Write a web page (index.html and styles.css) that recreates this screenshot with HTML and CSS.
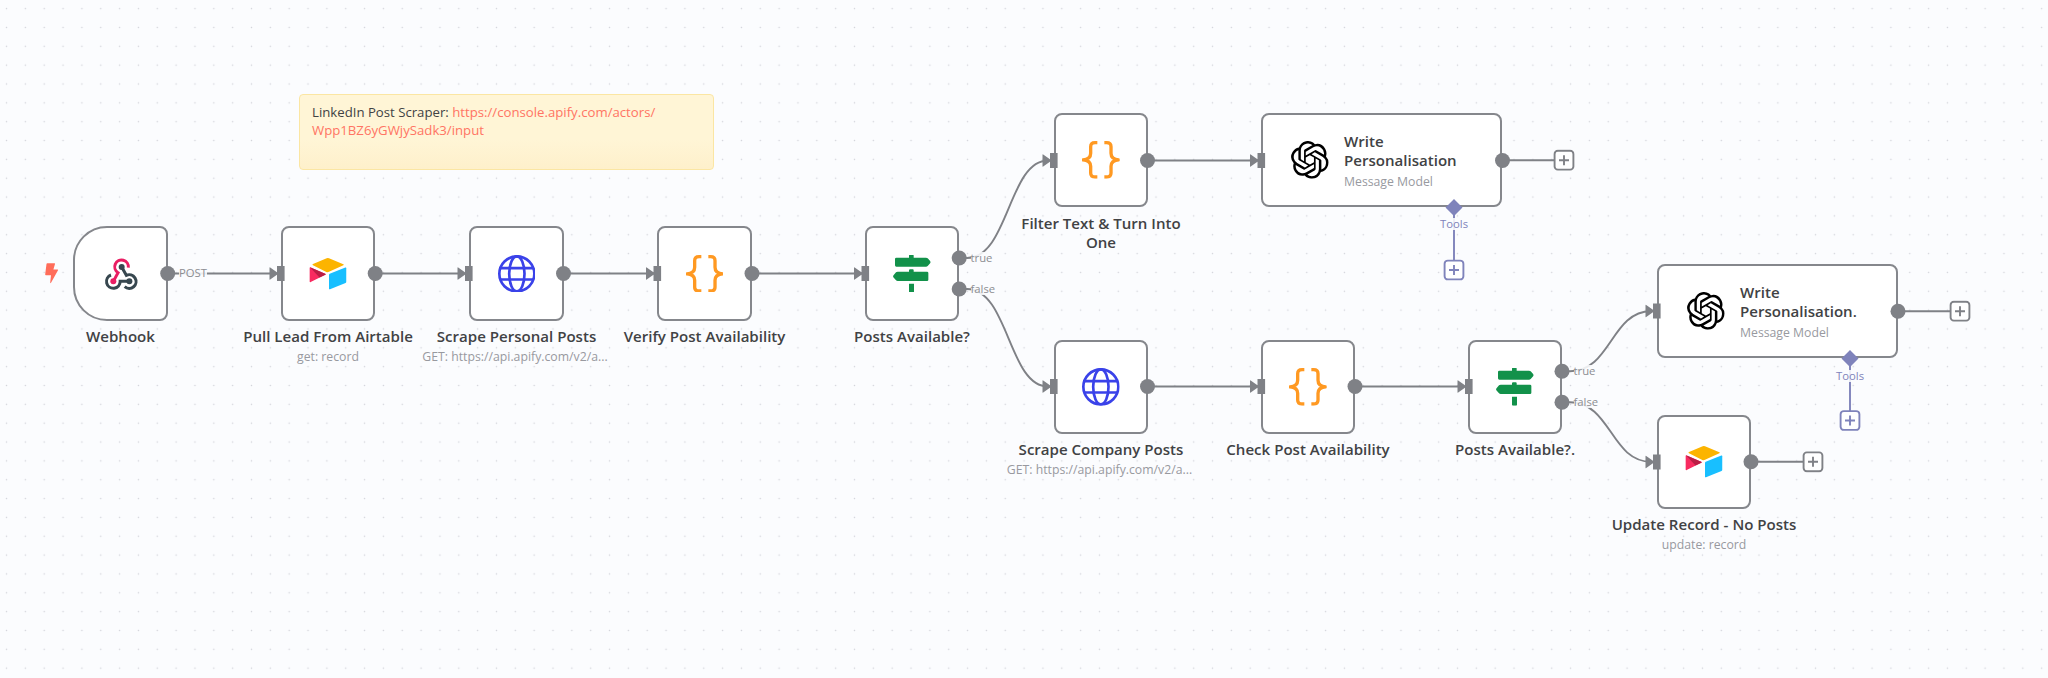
FILE: index.html
```
<!DOCTYPE html>
<html lang="en">
<head>
<meta charset="utf-8">
<title>Workflow</title>
<link rel="stylesheet" href="styles.css">
</head>
<body>
<svg class="defs" aria-hidden="true">
  <symbol id="i-webhook" viewBox="215 134 113 113">
    <g fill="none" stroke-width="9">
      <path stroke="#37474f" d="M274 170L288 195A20.500 20.500 0 1 1 283 229"/>
      <path stroke="#37474f" d="M297 213H269.500A20.500 20.500 0 1 1 242 194"/>
      <path stroke="#e91e63" d="M249 213L263 187A20.500 20.500 0 1 1 294 172"/>
    </g>
    <circle cx="274" cy="170" r="9" fill="#37474f"/><circle cx="297" cy="213" r="9" fill="#37474f"/><circle cx="249" cy="213" r="9" fill="#e91e63"/>
  </symbol>
  <symbol id="i-airtable" viewBox="237 134 113 113">
    <path fill="#fcb400" d="M290 144Q293 142.500 297 144L340 161.500Q343 163 340 164.500L297 184.500Q293 187 289 185L249 165Q245 163 249 161Z"/>
    <path fill="#18bfff" d="M297 193.500Q297 191.500 299 190.500L346 171.500Q349 170.500 349 173.500V214.500Q349 217 346.500 218L300 236.500Q297 237.500 297 235Z"/>
    <path fill="#f82b60" d="M239 173Q239 170 242.500 171.500L285.500 190Q289 191.500 286 193.500L242 215Q239 216.500 239 213.500Z"/>
    <path fill="#ba1e45" d="M240 171L285.500 190Q289 191.500 286 193.500L268.500 201.500Z"/>
  </symbol>
  <symbol id="i-globe" viewBox="0 0 113 113">
    <g fill="none" stroke="#3a42e9" stroke-width="8"><circle cx="56.500" cy="56.500" r="52.500"/><ellipse cx="56.500" cy="56.500" rx="23" ry="52.500"/><path d="M7 39.500H106M7 73.500H106"/></g>
  </symbol>
  <symbol id="i-code" viewBox="259 135 113 113">
    <path fill="none" stroke="#ff9922" stroke-width="10" stroke-linejoin="round" d="M305 140H298Q285 140 285 152V172Q285 190 262 191.500Q285 193 285 211V231Q285 243 298 243H305M326 140H333Q346 140 346 152V172Q346 190 369 191.500Q346 193 346 211V231Q346 243 333 243H326"/>
  </symbol>
  <symbol id="i-sign" viewBox="160 133 113 113">
    <path fill="#12914a" d="M208 141V135Q208 132 211 132H219Q222 132 222 135V141H259Q262 141 264 143L272 152Q274 154.500 272 157L264 166Q262 168 259 168H170Q166 168 166 164V145Q166 141 170 141ZM208 183V179Q208 176 211 176H219Q222 176 222 179V183H262Q266 183 266 187V207Q266 211 262 211H174Q171 211 169 209L161 199.500Q159.500 197 161 194.500L169 185Q171 183 174 183ZM208 219H223V243Q223 246 220 246H211Q208 246 208 243Z"/>
  </symbol>
  <symbol id="i-openai" viewBox="0 0 24 24">
    <path d="M22.2819 9.8211a5.9847 5.9847 0 0 0-.5157-4.9108 6.0462 6.0462 0 0 0-6.5098-2.9A6.0651 6.0651 0 0 0 4.9807 4.1818a5.9847 5.9847 0 0 0-3.9977 2.9 6.0462 6.0462 0 0 0 .7427 7.0966 5.98 5.98 0 0 0 .511 4.9107 6.051 6.051 0 0 0 6.5146 2.9001A5.9847 5.9847 0 0 0 13.2599 24a6.0557 6.0557 0 0 0 5.7718-4.2058 5.9894 5.9894 0 0 0 3.9977-2.9001 6.0557 6.0557 0 0 0-.7475-7.0729zm-9.022 12.6081a4.4755 4.4755 0 0 1-2.8764-1.0408l.1419-.0804 4.7783-2.7582a.7948.7948 0 0 0 .3927-.6813v-6.7369l2.02 1.1686a.071.071 0 0 1 .038.052v5.5826a4.504 4.504 0 0 1-4.4945 4.4944zm-9.6607-4.1254a4.4708 4.4708 0 0 1-.5346-3.0137l.142.0852 4.783 2.7582a.7712.7712 0 0 0 .7806 0l5.8428-3.3685v2.3324a.0804.0804 0 0 1-.0332.0615L9.74 19.9502a4.4992 4.4992 0 0 1-6.1408-1.6464zM2.3408 7.8956a4.485 4.485 0 0 1 2.3655-1.9728V11.6a.7664.7664 0 0 0 .3879.6765l5.8144 3.3543-2.0201 1.1685a.0757.0757 0 0 1-.071 0l-4.8303-2.7865A4.504 4.504 0 0 1 2.3408 7.872zm16.5963 3.8558L13.1038 8.364 15.1192 7.2a.0757.0757 0 0 1 .071 0l4.8303 2.7913a4.4944 4.4944 0 0 1-.6765 8.1042v-5.6772a.79.79 0 0 0-.407-.667zm2.0107-3.0231l-.142-.0852-4.7735-2.7818a.7759.7759 0 0 0-.7854 0L9.409 9.2297V6.8974a.0662.0662 0 0 1 .0284-.0615l4.8303-2.7866a4.4992 4.4992 0 0 1 6.6802 4.66zM8.3065 12.863l-2.02-1.1638a.0804.0804 0 0 1-.038-.0567V6.0742a4.4992 4.4992 0 0 1 7.3757-3.4537l-.142.0805L8.704 5.459a.7948.7948 0 0 0-.3927.6813zm1.0976-2.3654l2.602-1.4998 2.6069 1.4998v2.9994l-2.5974 1.4997-2.6067-1.4997Z"/>
  </symbol>
  <symbol id="in" viewBox="-8 -8 16 16" overflow="visible">
    <path class="solid" d="M-11.500 -5.800Q-11.500 -6.500 -10.800 -6L-3 -.6V.6L-10.800 6Q-11.500 6.500 -11.500 5.800ZM-4 -7.600H3.600V7.600H-4Z"/>
  </symbol>
  <symbol id="plus" viewBox="-11 -11 22 22">
    <rect x="-9.400" y="-9.400" width="18.800" height="18.800" rx="3.200" fill="#fff" stroke="currentColor" stroke-width="1.900"/>
    <path d="M-5 0H5M0 -5V5" stroke="currentColor" stroke-width="1.900"/>
  </symbol>
</svg>

<main class="canvas">
  <section class="sticky">LinkedIn Post Scraper: <a class="link">https://console.apify.com/actors/<wbr>Wpp1BZ6yGWjySadk3/input</a></section>

  <article class="node trigger n-webhook"><svg class="icon"><use href="#i-webhook"/></svg><div class="caption"><h3>Webhook</h3></div></article>
  <article class="node n-pull"><svg class="icon"><use href="#i-airtable"/></svg><div class="caption"><h3>Pull Lead From Airtable</h3><p>get: record</p></div></article>
  <article class="node n-personal"><svg class="icon"><use href="#i-globe"/></svg><div class="caption"><h3>Scrape Personal Posts</h3><p class="url">GET: https://api.apify.com/v2/a...</p></div></article>
  <article class="node n-verify"><svg class="icon"><use href="#i-code"/></svg><div class="caption"><h3>Verify Post Availability</h3></div></article>
  <article class="node n-if1"><svg class="icon"><use href="#i-sign"/></svg><div class="caption"><h3>Posts Available?</h3></div></article>
  <article class="node n-filter"><svg class="icon"><use href="#i-code"/></svg><div class="caption"><h3>Filter Text &amp; Turn Into<br>One</h3></div></article>
  <article class="node wide n-write1"><svg class="icon"><use href="#i-openai"/></svg><div class="inner"><h3>Write Personalisation</h3><p>Message Model</p></div></article>
  <article class="node n-company"><svg class="icon"><use href="#i-globe"/></svg><div class="caption"><h3>Scrape Company Posts</h3><p class="url">GET: https://api.apify.com/v2/a...</p></div></article>
  <article class="node n-check"><svg class="icon"><use href="#i-code"/></svg><div class="caption"><h3>Check Post Availability</h3></div></article>
  <article class="node n-if2"><svg class="icon"><use href="#i-sign"/></svg><div class="caption"><h3>Posts Available?.</h3></div></article>
  <article class="node wide n-write2"><svg class="icon"><use href="#i-openai"/></svg><div class="inner"><h3>Write Personalisation.</h3><p>Message Model</p></div></article>
  <article class="node n-update"><svg class="icon"><use href="#i-airtable"/></svg><div class="caption"><h3>Update Record - No Posts</h3><p>update: record</p></div></article>

  <svg class="wires" viewBox="0 0 2048 678">
    <path fill="#ff6d5a" d="M47.300 263.300H54.500Q55.200 263.300 55 264L53.400 269.400H57.500Q58.400 269.500 58 270.300L51 282.800Q50.200 283.800 50.200 282.600L51 275.200H46Q45 275.200 45.200 274.200L46.500 264Q46.600 263.300 47.300 263.300Z"/>
    <g class="edge">
      <path d="M168 273.500H272M375 273.500H460M563.500 273.500H649M752 273.500H856M1147.500 160.500H1252M1147.500 386.500H1252M1355 386.500H1460M1502.500 160.300H1554M1898 311.300H1950M1750.500 461.800H1803"/>
      <path d="M959 258H967C1008.500 258 1008.500 160.500 1048 160.500M959 289H967C1008.500 289 1008.500 386.500 1048 386.500M1562 371.200H1570C1611 371.200 1611 311.300 1651 311.300M1562 402.300H1570C1611 402.300 1611 461.800 1651 461.800"/>
      <path class="tool" d="M1454 207V260M1850 358V411"/>
    </g>
    <g class="solid">
      <circle cx="167.700" cy="273.500" r="7.500"/><circle cx="375.200" cy="273.500" r="7.500"/><circle cx="563.500" cy="273.500" r="7.500"/><circle cx="752" cy="273.500" r="7.500"/>
      <circle cx="959.200" cy="258" r="7.500"/><circle cx="959.200" cy="289" r="7.500"/><circle cx="1147.500" cy="160.500" r="7.500"/><circle cx="1502.500" cy="160.500" r="7.500"/>
      <circle cx="1147.500" cy="386.500" r="7.500"/><circle cx="1355" cy="386.500" r="7.500"/><circle cx="1562" cy="371.200" r="7.500"/><circle cx="1562" cy="402.300" r="7.500"/>
      <circle cx="1898" cy="311.300" r="7.500"/><circle cx="1751" cy="461.800" r="7.500"/>
    </g>
    <path class="diamond" d="M1454 199L1462.500 207.500L1454 216L1445.500 207.500ZM1850 350L1858.500 358.500L1850 367L1841.500 358.500Z"/>
    <g>
      <use href="#in" x="273" y="265.500" width="16" height="16"/><use href="#in" x="461" y="265.500" width="16" height="16"/><use href="#in" x="649.500" y="265.500" width="16" height="16"/><use href="#in" x="857.500" y="265.500" width="16" height="16"/>
      <use href="#in" x="1046" y="152.500" width="16" height="16"/><use href="#in" x="1253.500" y="152.500" width="16" height="16"/><use href="#in" x="1046" y="378.500" width="16" height="16"/><use href="#in" x="1253.500" y="378.500" width="16" height="16"/>
      <use href="#in" x="1461" y="378.500" width="16" height="16"/><use href="#in" x="1649" y="303" width="16" height="16"/><use href="#in" x="1649" y="454" width="16" height="16"/>
    </g>
    <g class="gray">
      <use href="#plus" x="1553" y="149.200" width="22" height="22"/><use href="#plus" x="1949" y="300.200" width="22" height="22"/><use href="#plus" x="1802" y="450.800" width="22" height="22"/>
    </g>
    <g class="violet">
      <use href="#plus" x="1443" y="259" width="22" height="22"/><use href="#plus" x="1839" y="409.500" width="22" height="22"/>
    </g>
  </svg>

  <span class="tag t-post">POST</span>
  <span class="tag t-true1">true</span>
  <span class="tag t-false1">false</span>
  <span class="tag t-true2">true</span>
  <span class="tag t-false2">false</span>
  <span class="tag tools t-tools1">Tools</span>
  <span class="tag tools t-tools2">Tools</span>
</main>
</body>
</html>
```
FILE: styles.css
```
* { box-sizing: border-box; }
body { margin: 0; font-family: "Open Sans", "Noto Sans", sans-serif; color: #414244; }
h3, p { margin: 0; }
.defs { position: absolute; width: 0; height: 0; }
.canvas {
  position: relative;
  width: 2048px;
  height: 678px;
  overflow: hidden;
  background: #fbfcfe radial-gradient(circle at center, #d3d4da 0.5px, rgba(211, 212, 218, 0) 1.1px) -2.9px -0.8px / 18.845px 18.845px;
}
.wires { position: absolute; left: 0; top: 0; width: 2048px; height: 678px; pointer-events: none; }
.edge { fill: none; stroke: #7f8186; stroke-width: 1.9; }
.edge .tool { stroke: #7f83bb; }
.solid { fill: #7f8186; }
.diamond { fill: #7f83bb; }
.gray { color: #7f8186; }
.violet { color: #7f83bb; }

.sticky {
  position: absolute; left: 299px; top: 94px; width: 415px; height: 76px;
  padding: 8px 12px;
  border: 1px solid #fbe6a3; border-radius: 4px;
  background: linear-gradient(#fff5d6 60%, #fef0cb);
  font-size: 13.19px; line-height: 18px;
}
.link { color: #ff7463; }

.node {
  position: absolute; width: 94px; height: 94px;
  display: flex; align-items: center; justify-content: center;
  background: #fff; border: 2px solid #85878c; border-radius: 8px;
}
.trigger { border-radius: 34px 8px 8px 34px; }
.icon { width: 37.7px; height: 37.7px; flex: none; }
.caption {
  position: absolute; top: 98px; left: 50%; width: 220px; margin-left: -110px;
  text-align: center;
}
.n-webhook .caption, .n-pull .caption, .n-personal .caption,
.n-verify .caption, .n-if1 .caption, .n-filter .caption { top: 99px; }
h3 { font-size: 15.07px; line-height: 19px; font-weight: 600; }
p { font-size: 12.25px; line-height: 19px; color: #98999f; padding-top: 1px; }
.url { margin-left: -3px; }
.wide { width: 241px; justify-content: flex-start; padding-left: 28px; gap: 15.3px; }
.inner { width: 140px; padding-top: 2px; }
.inner p { padding-top: 2px; }

.n-webhook { left: 73px; top: 226px; width: 95px; height: 95px; }
.n-pull { left: 281px; top: 226px; height: 95px; }
.n-personal { left: 469px; top: 226px; width: 95px; height: 95px; }
.n-verify { left: 657px; top: 226px; width: 95px; height: 95px; }
.n-if1 { left: 865px; top: 226px; height: 95px; }
.n-filter { left: 1054px; top: 113px; }
.n-write1 { left: 1261px; top: 113px; }
.n-company { left: 1054px; top: 340px; }
.n-check { left: 1261px; top: 340px; }
.n-if2 { left: 1468px; top: 340px; }
.n-write2 { left: 1657px; top: 264px; }
.n-update { left: 1657px; top: 415px; }

.tag {
  position: absolute; font-size: 11.3px; line-height: 12px; color: #8c8d92;
  background: rgba(251, 252, 254, 0.88);
}
.tools { color: #7f83bb; }
.t-post { left: 179px; top: 267px; }
.t-true1 { left: 970.500px; top: 252px; }
.t-false1 { left: 970.500px; top: 283px; }
.t-true2 { left: 1573.500px; top: 365px; }
.t-false2 { left: 1573.500px; top: 396px; }
.t-tools1 { left: 1440px; top: 218px; }
.t-tools2 { left: 1836px; top: 370px; }
```
